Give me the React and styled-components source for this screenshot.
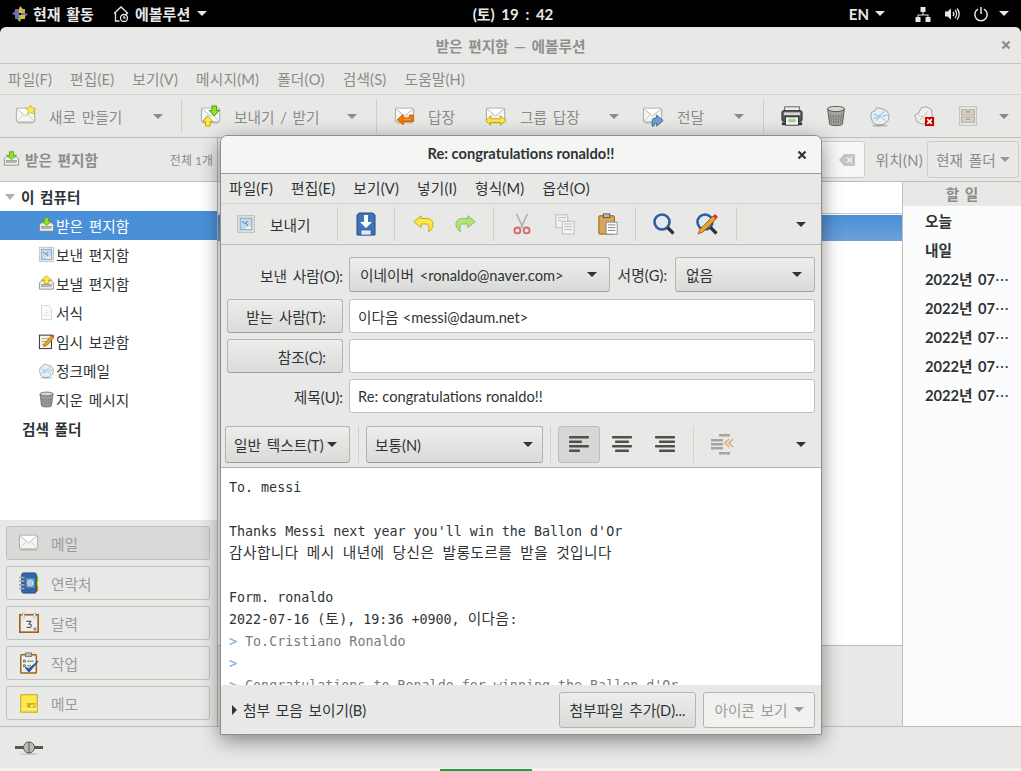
import React from 'react'
import styled, { createGlobalStyle } from 'styled-components'

const GlobalStyle = createGlobalStyle`
  html, body { margin: 0; padding: 0; background: #000; }
  * { box-sizing: border-box; }
`

const Svg = ({ s = 22, children, ...rest }) => (
  <IconSvg width={s} height={s} viewBox="0 0 24 24" {...rest}>{children}</IconSvg>
)

// envelope shared by the mail buttons
const Envelope = () => (
  <g>
    <rect x="1.5" y="3.5" width="20" height="15" rx="1" fill="#f6f6f4" stroke="#a2a29c" />
    <path d="M2 18 9 10.5M21 18l-7-7.5" stroke="#c9c9c4" fill="none" />
    <path d="M2 4l9.5 8L21 4" stroke="#b3b3ad" fill="#fff" />
    <rect x="3" y="19" width="17" height="1.5" fill="#000" opacity=".12" />
  </g>
)

const NewMailIcon = () => (
  <Svg>
    <Envelope />
    <path d="M17 0l1.8 3.3 3.7.5-2.7 2.5.7 3.7L17 8.2l-3.5 1.8.7-3.7-2.7-2.5 3.7-.5z" fill="#fce94f" stroke="#d4b106" strokeWidth=".7" />
  </Svg>
)
const SendReceiveIcon = () => (
  <Svg>
    <Envelope />
    <path d="M13 1h5v5h3l-5.5 6L10 6h3z" fill="#8ae234" stroke="#4e9a06" />
    <path d="M6 23v-5H3l5.5-6 5.5 6h-3v5z" fill="#fce94f" stroke="#c4a000" />
  </Svg>
)
const ReplyIcon = () => (
  <Svg>
    <Envelope />
    <path d="M21 11v7H10v3.500l-6.500-5.500L10 10.500V14h7v-3z" fill="#f57900" stroke="#ce5c00" />
    <path d="M11 15.500h7" stroke="#fcaf3e" />
  </Svg>
)
const GroupReplyIcon = () => (
  <Svg>
    <Envelope />
    <path d="M1 17l5-5v3h11v-3l6 5-6 5v-3H6v3z" fill="#fce94f" stroke="#c4a000" />
  </Svg>
)
const ForwardIcon = () => (
  <Svg>
    <Envelope />
    <path d="M11 23v-5a4 4 0 0 1 4-4h1v-3l7 6-7 6v-3h-2l-1 3z" fill="#729fcf" stroke="#3465a4" />
  </Svg>
)
const PrintIcon = () => (
  <Svg>
    <rect x="4" y="2" width="16" height="5" fill="#eeeeec" stroke="#555" />
    <rect x="1" y="6" width="22" height="12" rx="2" fill="#555753" stroke="#2e3436" />
    <rect x="3" y="8" width="18" height="3" fill="#d3d7cf" />
    <rect x="5" y="13" width="14" height="9" fill="#fff" stroke="#2e3436" />
    <rect x="8" y="15" width="8" height="4" fill="#a9d18e" />
    <rect x="1" y="19" width="4" height="3" fill="#2e3436" />
    <rect x="19" y="19" width="4" height="3" fill="#2e3436" />
  </Svg>
)
const TrashIcon = ({ s = 22 }) => (
  <Svg s={s}>
    <ellipse cx="12" cy="4.500" rx="9.500" ry="3" fill="#d3d7cf" stroke="#555753" />
    <path d="M3 5l2 16c1 2 13 2 14 0l2-16c-3 3-15 3-18 0z" fill="#a6a8a3" stroke="#555753" />
    <path d="M6 9l1 12M9 10l.5 11.500M12 10v12M15 10l-.5 11.500M18 9l-1 12M4 11c4 2 12 2 16 0M4.500 14c4 2 11 2 15 0M5 17c4 2 10 2 14 0" stroke="#6b6d68" strokeWidth=".6" fill="none" />
  </Svg>
)
const JunkIcon = ({ s = 22 }) => (
  <Svg s={s}>
    <path d="M3 8l4-2 1-3 6 1 5 2 3 5-1 6-5 4-7 1-5-3-2-6z" fill="#e4eff6" stroke="#9a9f98" />
    <path d="M5 10l6 2 6-5M8 17l4-5 6 5M5 15l5-2M15 12l5-1" stroke="#84b4d8" fill="none" />
    <ellipse cx="12" cy="22.500" rx="9" ry="1.300" fill="#000" opacity=".2" />
  </Svg>
)
const NotJunkIcon = () => (
  <Svg>
    <path d="M2 11l4-2 3-6 6-1 5 3 1 7-3 6-8 3-6-3z" fill="#eeeeec" stroke="#9a9f98" />
    <path d="M6 11l5 2 5-6M7 17l4-4" stroke="#babdb6" fill="none" />
    <rect x="13" y="13" width="10" height="10" fill="#cc0000" />
    <path d="M15.500 15.500l5 5M20.500 15.500l-5 5" stroke="#fff" strokeWidth="1.800" />
  </Svg>
)
const ArchiveIcon = () => (
  <Svg>
    <rect x="3" y="2" width="18" height="20" fill="#eeeeec" stroke="#b5b5ae" />
    <rect x="5" y="5" width="14" height="6" fill="#d7cfc3" stroke="#b5aca0" />
    <rect x="5" y="13" width="14" height="6" fill="#d7cfc3" stroke="#b5aca0" />
    <rect x="10" y="7" width="4" height="1" fill="#888" />
    <rect x="10" y="15" width="4" height="1" fill="#888" />
  </Svg>
)
const Tray = () => (
  <g>
    <path d="M2 11l3-3h14l3 3v9H2z" fill="#eeeeec" stroke="#73766f" />
    <rect x="5" y="13" width="14" height="3" fill="#babdb6" stroke="#73766f" strokeWidth=".6" />
  </g>
)
const InboxIcon = ({ s = 17 }) => (
  <Svg s={s}>
    <Tray />
    <path d="M9 1h6v5h4l-7 6-7-6h4z" fill="#8ae234" stroke="#4e9a06" />
  </Svg>
)
const OutboxIcon = ({ s = 17 }) => (
  <Svg s={s}>
    <Tray />
    <path d="M9 12V7H5l7-6 7 6h-4v5z" fill="#fce94f" stroke="#c4a000" />
  </Svg>
)
const StampIcon = ({ s = 17 }) => (
  <Svg s={s}>
    <rect x="2" y="2" width="20" height="20" fill="#e6e6e3" stroke="#9a9a94" strokeDasharray="2 1" />
    <rect x="5" y="5" width="14" height="14" fill="#c6daee" stroke="#7f9cb8" />
    <path d="M7 9l6 3 1 3M14 8l-2 3" stroke="#506c88" fill="none" />
    <rect x="12" y="15" width="6" height="3" fill="#fff" opacity=".7" />
  </Svg>
)
const TemplateIcon = ({ s = 17 }) => (
  <Svg s={s}>
    <path d="M5 2h10l4 4v16H5z" fill="#fbfbfa" stroke="#c8c8c3" />
    <path d="M12 8v1M10.500 12v1M13.500 12v1M9 16v1M12 16v1M15 16v1" stroke="#9a9a94" />
  </Svg>
)
const DraftsIcon = ({ s = 17 }) => (
  <Svg s={s}>
    <rect x="2" y="3" width="17" height="19" fill="#f8f4df" stroke="#333" strokeWidth="1.400" />
    <path d="M5 8h11M5 12h8M5 16h5" stroke="#888" />
    <path d="M8 19l1-4 10-11 3 3-10 11z" fill="#f0a030" stroke="#8f5902" />
    <path d="M19 4l2-2 2 2-1 3z" fill="#ef2929" />
  </Svg>
)
const PlainMailIcon = () => (
  <Svg s={22}><Envelope /></Svg>
)
const ContactsIcon = () => (
  <Svg>
    <rect x="18" y="4" width="4" height="7" fill="#73d216" />
    <rect x="18" y="10" width="4" height="7" fill="#edd400" />
    <rect x="18" y="15" width="4" height="6" fill="#f57900" />
    <rect x="4" y="1" width="16" height="22" rx="2" fill="#3465a4" stroke="#204a87" />
    <path d="M1 6h6M1 10h6M1 14h6M1 18h6" stroke="#a8a8a2" strokeWidth="1.800" />
    <rect x="9" y="7" width="9" height="10" fill="#729fcf" />
    <circle cx="13.500" cy="12" r="2.800" fill="none" stroke="#fff" />
    <circle cx="13.500" cy="12" r="1" fill="none" stroke="#fff" strokeWidth=".7" />
  </Svg>
)
const CalendarIcon = () => (
  <Svg>
    <rect x="2" y="3" width="20" height="19" fill="#eeeeec" stroke="#a0611c" strokeWidth="1.800" />
    <rect x="5" y="1" width="2" height="6" rx="1" fill="#fff" stroke="#888" strokeWidth=".5" />
    <rect x="17" y="1" width="2" height="6" rx="1" fill="#fff" stroke="#888" strokeWidth=".5" />
    <path d="M9 10h5l-2 3c2 0 2.500 1 2.500 2 0 2-3 2.500-5 1.500" fill="none" stroke="#444" strokeWidth="1.100" />
    <rect x="17" y="17" width="3" height="3" fill="#888" />
  </Svg>
)
const TasksIcon = () => (
  <Svg>
    <rect x="3" y="3" width="17" height="20" rx="1" fill="#eeeeec" stroke="#a0611c" strokeWidth="1.600" />
    <rect x="8" y="1" width="7" height="4" fill="#babdb6" stroke="#555" strokeWidth=".7" />
    <path d="M6 9h2v2H6zM6 14h2v2H6zM10 10h7M10 15h4" stroke="#555" fill="none" strokeWidth=".9" />
    <path d="M8 17l4 5 10-12-10 8z" fill="#3465a4" stroke="#204a87" />
  </Svg>
)
const MemoIcon = () => (
  <Svg>
    <rect x="3" y="3" width="18" height="19" fill="#fce94f" stroke="#c4a000" />
    <rect x="3" y="18" width="18" height="1" fill="#fff" opacity=".6" />
    <path d="M10 17v-5h9v5z" fill="#c4a000" opacity=".8" />
    <path d="M14 17v-3h5z" fill="#fff6a8" />
  </Svg>
)
const PlugIcon = () => (
  <svg width="28" height="14" viewBox="0 0 28 14">
    <rect x="0" y="5" width="9" height="3" fill="#555753" />
    <rect x="19" y="5" width="9" height="3" fill="#555753" />
    <ellipse cx="14" cy="6.500" rx="5.500" ry="5.500" fill="#babdb6" stroke="#555753" />
    <path d="M14 1v11" stroke="#555753" />
    <ellipse cx="14" cy="13" rx="10" ry="1" fill="#000" opacity=".12" />
  </svg>
)
const SaveIcon = () => (
  <Svg s={24}>
    <path d="M5 1h14l2 2v20H3V3z" fill="#3f74b8" stroke="#204a87" />
    <path d="M10 3h4v7h4l-6 6-6-6h4z" fill="#fff" />
    <rect x="7" y="18" width="10" height="5" fill="#dfe7f1" stroke="#204a87" strokeWidth=".6" />
  </Svg>
)
const UndoIcon = () => (
  <Svg>
    <path d="M10 3L2 9.500 10 16v-4h5c2.500 0 4 1.500 3.500 6l-.5 2.500c3-2 5-5 5-8 0-4-3-6.500-7-6.500h-6z" fill="#fce94f" stroke="#c4a000" />
  </Svg>
)
const RedoIcon = () => (
  <Svg style={{ opacity: 0.6 }}>
    <path d="M14 3l8 6.500L14 16v-4H9c-2.500 0-4 1.500-3.500 6l.5 2.500c-3-2-5-5-5-8 0-4 3-6.500 7-6.500h6z" fill="#8ae234" stroke="#4e9a06" />
  </Svg>
)
const CutIcon = () => (
  <Svg style={{ opacity: 0.55 }}>
    <path d="M6 1l7 15M18 1l-7 15" stroke="#888a85" strokeWidth="1.800" fill="none" />
    <circle cx="7" cy="19" r="3.200" fill="none" stroke="#cc0000" strokeWidth="2" />
    <circle cx="17" cy="19" r="3.200" fill="none" stroke="#cc0000" strokeWidth="2" />
  </Svg>
)
const CopyIcon = () => (
  <Svg style={{ opacity: 0.5 }}>
    <rect x="2" y="2" width="13" height="14" fill="#fff" stroke="#888a85" />
    <rect x="9" y="9" width="13" height="14" fill="#fff" stroke="#888a85" />
    <path d="M4 5h9M4 8h4M11 12h9M11 15h9M11 18h9" stroke="#888a85" />
  </Svg>
)
const PasteIcon = () => (
  <Svg>
    <rect x="2" y="3" width="17" height="20" rx="1" fill="#d7a55c" stroke="#8f5902" />
    <rect x="7" y="1" width="7" height="4" fill="#babdb6" stroke="#555753" />
    <rect x="10" y="10" width="12" height="13" fill="#fff" stroke="#888a85" />
    <path d="M12 13h8M12 16h8M12 19h8" stroke="#777" />
  </Svg>
)
const FindIcon = () => (
  <Svg s={24}>
    <circle cx="10" cy="10" r="7.500" fill="#dfe9f4" stroke="#2f5c9e" strokeWidth="2.600" />
    <path d="M15.500 15.500l6 6" stroke="#2e3436" strokeWidth="3.200" />
  </Svg>
)
const ReplaceIcon = () => (
  <Svg s={24}>
    <circle cx="10" cy="10" r="7.500" fill="#dfe9f4" stroke="#2f5c9e" strokeWidth="2.600" />
    <path d="M15.500 15.500l6 6" stroke="#2e3436" strokeWidth="3.200" />
    <path d="M3 22l2-5L18 4l3 3L8 20z" fill="#f0a030" stroke="#8f5902" strokeWidth=".8" />
    <path d="M18 4l2-2 3 3-2 2z" fill="#ef2929" />
  </Svg>
)
const AlignIcon = ({ kind }) => {
  const lines = [20, 13, 20, 11]
  return (
    <svg width="22" height="20" viewBox="0 0 22 20">
      {lines.map((w, i) => {
        const width = kind === 'left' ? w : kind === 'center' ? (i % 2 ? 14 : 20) : (i % 2 ? 16 : 20)
        const x = kind === 'left' ? 1 : kind === 'center' ? (22 - width) / 2 : 21 - width
        return <rect key={i} x={x} y={2 + i * 4.500} width={width} height="2.500" rx=".8" fill="#4f4f4c" />
      })}
    </svg>
  )
}
const IndentIcon = () => (
  <svg width="24" height="22" viewBox="0 0 24 22" style={{ opacity: 0.6 }}>
    <rect x="9" y="1" width="11" height="2.500" fill="#777" />
    <rect x="1" y="6" width="12" height="2.500" fill="#777" />
    <rect x="1" y="10" width="12" height="2.500" fill="#777" />
    <rect x="1" y="14" width="12" height="2.500" fill="#777" />
    <rect x="9" y="19" width="11" height="2.500" fill="#777" />
    <path d="M19 6l-4 4 4 4M23 6l-4 4 4 4" stroke="#e9822e" strokeWidth="1.600" fill="none" />
  </svg>
)
const CentOsIcon = () => (
  <svg width="16" height="16" viewBox="0 0 16 16">
    <path d="M8 0l3 3v4H7V3z" fill="#cfc34a" />
    <path d="M16 8l-3 3H9V7h4z" fill="#9c5aa8" />
    <path d="M8 16l-3-3V9h4v4z" fill="#a8c14a" />
    <path d="M0 8l3-3h4v4H3z" fill="#5a7fb5" />
    <rect x="3" y="3" width="4" height="4" fill="#9c5aa8" />
    <rect x="9" y="9" width="4" height="4" fill="#cfc34a" />
    <rect x="3" y="9" width="4" height="4" fill="#5a7fb5" />
    <rect x="9" y="3" width="4" height="4" fill="#a8c14a" />
  </svg>
)
const AppIcon = () => (
  <svg width="16" height="16" viewBox="0 0 16 16" fill="none" stroke="#e8e8e8" strokeWidth="1.300">
    <path d="M1 7.500L8 1l7 6.500M2.500 7v8h4M13.500 7v2" />
    <circle cx="11" cy="12" r="3.500" />
    <path d="M11 10v2h1.500" />
  </svg>
)
const NetworkIcon = () => (
  <svg width="16" height="16" viewBox="0 0 16 16" fill="#e8e8e8">
    <rect x="5.500" y="1" width="5" height="5" />
    <rect x="0.500" y="11" width="5" height="5" />
    <rect x="10.500" y="11" width="5" height="5" />
    <path d="M7.500 6h1v2.500h5V11h-1V9.500h-9V11h-1V8.500h5z" />
  </svg>
)
const VolumeIcon = () => (
  <svg width="16" height="16" viewBox="0 0 16 16" fill="none" stroke="#e8e8e8" strokeWidth="1.300">
    <path d="M1 5.500h2.500L7 2.500v11l-3.500-3H1z" fill="#e8e8e8" stroke="none" />
    <path d="M9 6a3 3 0 0 1 0 4M11 4a6 6 0 0 1 0 8M13 2.500a8 8 0 0 1 0 11" />
  </svg>
)
const PowerIcon = () => (
  <svg width="16" height="16" viewBox="0 0 16 16" fill="none" stroke="#e8e8e8" strokeWidth="1.500">
    <path d="M5 3.200a6.200 6.200 0 1 0 6 0M8 1v7" />
  </svg>
)
const CloseGlyph = ({ color }) => (
  <svg width="10" height="10" viewBox="0 0 10 10">
    <path d="M1.500 1.500l7 7M8.500 1.500l-7 7" stroke={color} strokeWidth="2.200" />
  </svg>
)
const ClearIcon = () => (
  <svg width="16" height="12" viewBox="0 0 16 12">
    <path d="M5 0h11v12H5L0 6z" fill="#c5c5c2" />
    <path d="M8 3.500l5 5M13 3.500l-5 5" stroke="#f3f3f2" strokeWidth="1.600" />
  </svg>
)

const mainMenu = ['파일(F)', '편집(E)', '보기(V)', '메시지(M)', '폴더(O)', '검색(S)', '도움말(H)']
const composeMenu = ['파일(F)', '편집(E)', '보기(V)', '넣기(I)', '형식(M)', '옵션(O)']
const folders = [
  { name: '받은 편지함', icon: <InboxIcon />, selected: true },
  { name: '보낸 편지함', icon: <StampIcon /> },
  { name: '보낼 편지함', icon: <OutboxIcon /> },
  { name: '서식', icon: <TemplateIcon /> },
  { name: '임시 보관함', icon: <DraftsIcon /> },
  { name: '정크메일', icon: <JunkIcon s={17} /> },
  { name: '지운 메시지', icon: <TrashIcon s={17} /> },
]
const switches = [
  { name: '메일', icon: <PlainMailIcon />, active: true },
  { name: '연락처', icon: <ContactsIcon /> },
  { name: '달력', icon: <CalendarIcon /> },
  { name: '작업', icon: <TasksIcon /> },
  { name: '메모', icon: <MemoIcon /> },
]
const todoDays = ['오늘', '내일', '2022년 07', '2022년 07', '2022년 07', '2022년 07', '2022년 07']

export default function App() {
  return (
    <Desktop>
      <GlobalStyle />
      <TopBar>
        <TopItem $w={105} $pl={12}><CentOsIcon /><TopLabel $gap={5}>현재 활동</TopLabel></TopItem>
        <TopItem $w={364} $pl={8}><AppIcon /><TopLabel $gap={6}>에볼루션</TopLabel><Caret $c="#e8e8e8" $ml={7} /></TopItem>
        <Clock>(토) 19 : 42</Clock>
        <TopRight>
          <TopLabel>EN</TopLabel><Caret $c="#e8e8e8" $ml={6} />
          <TrayIcons><NetworkIcon /><VolumeIcon /><PowerIcon /></TrayIcons>
          <Caret $c="#e8e8e8" $ml={10} />
        </TopRight>
      </TopBar>

      <MainWindow>
        <MainTitle>
          <span>받은 편지함 — 에볼루션</span>
          <TitleClose><CloseGlyph color="#8b8b89" /></TitleClose>
        </MainTitle>
        <MainMenuBar>
          {mainMenu.map((m) => <span key={m}>{m}</span>)}
        </MainMenuBar>
        <MainToolbar>
          <ToolBtn $w={181} $pl={15} $pr={18}><NewMailIcon /><ToolLabel $ml={12}>새로 만들기</ToolLabel><Caret $c="#8a8a88" $auto /></ToolBtn>
          <VSep />
          <ToolBtn $w={194} $pl={18} $pr={19}><SendReceiveIcon /><ToolLabel $ml={12}>보내기 / 받기</ToolLabel><Caret $c="#8a8a88" $auto /></ToolBtn>
          <VSep />
          <ToolBtn $w={91} $pl={17} $pr={0}><ReplyIcon /><ToolLabel $ml={12}>답장</ToolLabel></ToolBtn>
          <ToolBtn $w={156} $pl={17} $pr={5}><GroupReplyIcon /><ToolLabel $ml={13}>그룹 답장</ToolLabel><Caret $c="#8a8a88" $auto /></ToolBtn>
          <ToolBtn $w={139} $pl={18} $pr={19}><ForwardIcon /><ToolLabel $ml={13}>전달</ToolLabel><Caret $c="#8a8a88" $auto /></ToolBtn>
          <VSep />
          <IconRow>
            <PrintIcon /><TrashIcon /><JunkIcon /><NotJunkIcon /><ArchiveIcon />
          </IconRow>
          <Caret $c="#8a8a88" $auto $mr={12} />
        </MainToolbar>

        <MainBody>
          <Sidebar>
            <FolderHeader>
              <InboxIcon />
              <FolderTitle>받은 편지함</FolderTitle>
              <FolderCount>전체 1개</FolderCount>
            </FolderHeader>
            <FolderTree>
              <TreeGroup><Expander />이 컴퓨터</TreeGroup>
              {folders.map((f) => (
                <FolderRow key={f.name} $selected={f.selected}>{f.icon}<span>{f.name}</span></FolderRow>
              ))}
              <TreeGroup $plain>검색 폴더</TreeGroup>
            </FolderTree>
            <Switcher>
              {switches.map((s) => (
                <SwitchBtn key={s.name} $active={s.active}>
                  <SwitchIcon>{s.icon}</SwitchIcon>{s.name}
                </SwitchBtn>
              ))}
            </Switcher>
          </Sidebar>

          <Center>
            <SearchBar>
              <SearchEntry><ClearIcon /></SearchEntry>
              <SearchLabel>위치(N)</SearchLabel>
              <ScopeCombo>현재 폴더<Caret $c="#999" $ml={4} /></ScopeCombo>
            </SearchBar>
            <CenterRow>
              <MessagePane>
                <ListHeader />
                <MessageList><SelectedMessage /></MessageList>
                <PreviewPane />
              </MessagePane>
              <TodoPanel>
                <TodoHeader>할 일</TodoHeader>
                {todoDays.map((d, i) => (
                  <TodoRow key={i}>{d}{i > 1 && <MidEllipsis>…</MidEllipsis>}</TodoRow>
                ))}
              </TodoPanel>
            </CenterRow>
          </Center>
        </MainBody>
        <StatusBar><PlugIcon /></StatusBar>
      </MainWindow>

      <Sliver>
        <SliverPart $w={440} />
        <SliverGreen />
        <SliverPart $w={40} />
      </Sliver>

      <ComposeWindow>
        <ComposeTitle>
          <span>Re: congratulations ronaldo!!</span>
          <TitleClose $right={14}><CloseGlyph color="#2e3436" /></TitleClose>
        </ComposeTitle>
        <ComposeMenuBar>
          {composeMenu.map((m) => <span key={m}>{m}</span>)}
        </ComposeMenuBar>
        <ComposeToolbar>
          <SendBtn><StampIcon s={20} /><span>보내기</span></SendBtn>
          <VSep />
          <Slot $w={56}><SaveIcon /></Slot>
          <VSep />
          <SlotGroup $pl={6} $pr={6}>
            <Slot $w={43}><UndoIcon /></Slot>
            <Slot $w={43}><RedoIcon /></Slot>
          </SlotGroup>
          <VSep />
          <SlotGroup $pl={6} $pr={6}>
            <Slot $w={43}><CutIcon /></Slot>
            <Slot $w={43}><CopyIcon /></Slot>
            <Slot $w={43}><PasteIcon /></Slot>
          </SlotGroup>
          <VSep />
          <SlotGroup $pl={6} $pr={8}>
            <Slot $w={43}><FindIcon /></Slot>
            <Slot $w={43}><ReplaceIcon /></Slot>
          </SlotGroup>
          <VSep />
          <Caret $c="#2e3436" $auto $mr={15} />
        </ComposeToolbar>

        <HeaderForm>
          <FieldLabel>보낸 사람(O):</FieldLabel>
          <FromRow>
            <Combo $grow>
              <span>이네이버 &lt;ronaldo@naver.com&gt;</span>
              <Caret $c="#2e3436" $auto $mr={6} />
            </Combo>
            <SignLabel>서명(G):</SignLabel>
            <Combo $w={140}>
              <span>없음</span>
              <Caret $c="#2e3436" $auto $mr={6} />
            </Combo>
          </FromRow>
          <AddressBtn>받는 사람(T):</AddressBtn>
          <TextEntry>이다음 &lt;messi@daum.net&gt;</TextEntry>
          <AddressBtn>참조(C):</AddressBtn>
          <TextEntry />
          <FieldLabel>제목(U):</FieldLabel>
          <TextEntry>Re: congratulations ronaldo!!</TextEntry>
        </HeaderForm>

        <FormatBar>
          <FormatCombo $w={125}>일반 텍스트(T)<Caret $c="#2e3436" $ml={3} /></FormatCombo>
          <FormatSep />
          <FormatCombo $w={177}>보통(N)<Caret $c="#2e3436" $auto $mr={3} /></FormatCombo>
          <FormatSep $ml={7} />
          <AlignBtn $on><AlignIcon kind="left" /></AlignBtn>
          <AlignBtn $ml={1}><AlignIcon kind="center" /></AlignBtn>
          <AlignBtn $ml={1}><AlignIcon kind="right" /></AlignBtn>
          <FormatSep $ml={7} />
          <Slot $w={42}><IndentIcon /></Slot>
          <Caret $c="#2e3436" $auto $mr={15} />
        </FormatBar>

        <MailBody>
          <Line>To. messi</Line>
          <Line />
          <Line>Thanks Messi next year you'll win the Ballon d'Or</Line>
          <Line><Hangul>감사합니다 메시 내년에 당신은 발롱도르를 받을 것입니다</Hangul></Line>
          <Line />
          <Line>Form. ronaldo</Line>
          <Line>2022-07-16 (<Hangul>토</Hangul>), 19:36 +0900, <Hangul>이다음</Hangul>:</Line>
          <Line $quote><QuoteMark>&gt;</QuoteMark> To.Cristiano Ronaldo</Line>
          <Line $quote><QuoteMark>&gt;</QuoteMark></Line>
          <Line $quote><QuoteMark>&gt;</QuoteMark> Congratulations to Ronaldo for winning the Ballon d'Or</Line>
        </MailBody>

        <ComposeFooter>
          <AttachToggle><RightCaret />첨부 모음 보이기(B)</AttachToggle>
          <FooterBtn $w={137}>첨부파일 추가(D)...</FooterBtn>
          <FooterBtn $w={112} $disabled>아이콘 보기<Caret $c="#9a9a98" $ml={6} /></FooterBtn>
        </ComposeFooter>
      </ComposeWindow>
    </Desktop>
  )
}

const IconSvg = styled.svg`
  flex: none;
  display: block;
`

const Desktop = styled.div`
  position: relative;
  width: 1021px;
  height: 771px;
  overflow: hidden;
  background: #000;
  font-family: Lato, "Noto Sans CJK KR", sans-serif;
  font-size: 14.67px;
  word-spacing: 2px;
  color: #2e3436;
`

const Caret = styled.span`
  flex: none;
  width: 0;
  height: 0;
  border-left: 5px solid transparent;
  border-right: 5px solid transparent;
  border-top: 5px solid ${(p) => p.$c};
  margin-left: ${(p) => (p.$auto ? 'auto' : `${p.$ml || 0}px`)};
  margin-right: ${(p) => p.$mr || 0}px;
`

const TopBar = styled.div`
  display: flex;
  align-items: center;
  height: 27px;
  color: #e8e8e8;
  font-weight: 700;
  font-size: 15px;
`

const TopItem = styled.div`
  display: flex;
  align-items: center;
  flex: none;
  width: ${(p) => p.$w}px;
  padding-left: ${(p) => p.$pl}px;
`

const TopLabel = styled.span`
  margin-left: ${(p) => p.$gap || 0}px;
`

const Clock = styled.div`
  flex: none;
  width: 88px;
  word-spacing: 3px;
  text-align: center;
  white-space: nowrap;
`

const TopRight = styled.div`
  display: flex;
  align-items: center;
  margin-left: auto;
  padding-right: 12px;
`

const TrayIcons = styled.div`
  display: flex;
  align-items: center;
  gap: 13px;
  margin-left: 30px;
`

const MainWindow = styled.div`
  display: flex;
  flex-direction: column;
  height: 741px;
  background: #e8e8e7;
  border-radius: 6px 6px 0 0;
  color: #8b8b89;
`

const MainTitle = styled.div`
  position: relative;
  flex: none;
  height: 37px;
  display: flex;
  align-items: center;
  justify-content: center;
  border-bottom: 1px solid #c4c4c1;
  font-weight: 700;
  font-size: 14.67px;
  color: #8f8f8d;
`

const TitleClose = styled.span`
  position: absolute;
  right: ${(p) => p.$right || 10}px;
  top: 50%;
  margin-top: -5px;
  display: flex;
`

const MainMenuBar = styled.div`
  flex: none;
  height: 31px;
  display: flex;
  align-items: center;
  gap: 18px;
  padding: 0 0 2px 8px;
  letter-spacing: 0.2px;
  border-bottom: 1px solid #d2d2cf;
`

const MainToolbar = styled.div`
  flex: none;
  height: 43px;
  display: flex;
  align-items: center;
  border-bottom: 1px solid #bdbdba;
`

const ToolBtn = styled.div`
  flex: none;
  display: flex;
  align-items: center;
  width: ${(p) => p.$w}px;
  padding: 0 ${(p) => p.$pr}px 0 ${(p) => p.$pl}px;
`

const ToolLabel = styled.span`
  margin-left: ${(p) => p.$ml}px;
  white-space: nowrap;
`

const VSep = styled.span`
  flex: none;
  width: 1px;
  height: 34px;
  background: #cfcfcc;
`

const IconRow = styled.div`
  display: flex;
  align-items: center;
  gap: 22px;
  padding-left: 17px;
`

const MainBody = styled.div`
  flex: 1;
  min-height: 0;
  display: flex;
  border-bottom: 1px solid #bdbdba;
`

const Sidebar = styled.div`
  flex: none;
  width: 218px;
  display: flex;
  flex-direction: column;
  border-right: 1px solid #bdbdba;
`

const FolderHeader = styled.div`
  flex: none;
  height: 44px;
  display: flex;
  align-items: center;
  padding: 0 4px 0 3px;
  border-bottom: 1px solid #bdbdba;
`

const FolderTitle = styled.span`
  margin-left: 5px;
  font-weight: 700;
`

const FolderCount = styled.span`
  margin-left: auto;
  font-size: 12px;
  word-spacing: 0;
`

const FolderTree = styled.div`
  flex: none;
  height: 338px;
  background: #fff;
  color: #2e3436;
`

const TreeGroup = styled.div`
  height: 29px;
  display: flex;
  align-items: center;
  padding-left: ${(p) => (p.$plain ? 22 : 5)}px;
  font-weight: 700;
`

const Expander = styled.span`
  width: 0;
  height: 0;
  margin-right: 6px;
  border-left: 5.5px solid transparent;
  border-right: 5.5px solid transparent;
  border-top: 6px solid #b0b0ae;
`

const FolderRow = styled.div`
  height: 29px;
  display: flex;
  align-items: center;
  gap: 1px;
  padding-left: 38px;
  background: ${(p) => (p.$selected ? '#4a90d9' : 'transparent')};
  color: ${(p) => (p.$selected ? '#fff' : '#2e3436')};
`

const Switcher = styled.div`
  flex: 1;
  display: flex;
  flex-direction: column;
  gap: 6px;
  padding: 6px 7px 0 6px;
  background: #e8e8e7;
`

const SwitchBtn = styled.div`
  height: 34px;
  display: flex;
  align-items: center;
  padding-left: 11px;
  border: 1px solid #c0c0bd;
  border-radius: 3px;
  background: ${(p) => (p.$active ? '#d9d9d8' : '#e9e9e8')};
  color: #9a9a98;
`

const SwitchIcon = styled.span`
  flex: none;
  width: 33px;
  display: flex;
`

const Center = styled.div`
  flex: 1;
  min-width: 0;
  display: flex;
  flex-direction: column;
`

const SearchBar = styled.div`
  flex: none;
  height: 44px;
  display: flex;
  align-items: center;
  justify-content: flex-end;
  padding-right: 2px;
  border-bottom: 1px solid #bdbdba;
`

const SearchEntry = styled.div`
  width: 200px;
  height: 37px;
  display: flex;
  align-items: center;
  justify-content: flex-end;
  padding-right: 9px;
  background: #f8f8f8;
  border: 1px solid #cdcdca;
  border-radius: 3px;
`

const SearchLabel = styled.span`
  margin: 0 4px 0 11px;
  letter-spacing: 0.3px;
`

const ScopeCombo = styled.div`
  width: 92px;
  height: 37px;
  display: flex;
  align-items: center;
  padding-left: 8px;
  white-space: nowrap;
  border: 1px solid #cdcdca;
  border-radius: 3px;
  background: #e9e9e8;
`

const CenterRow = styled.div`
  flex: 1;
  min-height: 0;
  display: flex;
`

const MessagePane = styled.div`
  flex: 1;
  min-width: 0;
  display: flex;
  flex-direction: column;
  background: #fff;
`

const ListHeader = styled.div`
  flex: none;
  height: 32px;
  background: #fff;
  border-bottom: 1px solid #c8c8c5;
`

const MessageList = styled.div`
  flex: 1;
  min-height: 0;
`

const SelectedMessage = styled.div`
  height: 26px;
  margin-top: 1px;
  background: linear-gradient(#4a90d9, #6ba0d8);
`

const PreviewPane = styled.div`
  flex: none;
  height: 81px;
  background: #e8e8e7;
  border-top: 1px solid #bdbdba;
`

const TodoPanel = styled.div`
  flex: none;
  width: 119px;
  background: #fcfcfc;
  border-left: 1px solid #bdbdba;
  color: #2e3436;
  font-weight: 700;
`

const TodoHeader = styled.div`
  height: 24px;
  padding-bottom: 2px;
  display: flex;
  align-items: center;
  justify-content: center;
  background: #e8e8e7;
  color: #8b8b89;
`

const TodoRow = styled.div`
  height: 29px;
  display: flex;
  align-items: center;
  padding-left: 22px;
  white-space: nowrap;
`

const MidEllipsis = styled.span`
  font-family: "Noto Sans CJK KR", sans-serif;
  font-weight: 500;
  font-size: 14px;
`

const StatusBar = styled.div`
  flex: none;
  height: 41px;
  display: flex;
  align-items: center;
  padding-left: 15px;
`

const Sliver = styled.div`
  height: 3px;
  display: flex;
  background: #f1f1f0;
`

const SliverPart = styled.span`
  width: ${(p) => p.$w}px;
`

const SliverGreen = styled.span`
  width: 92px;
  margin-top: 1px;
  background: #1aa33a;
`

const ComposeWindow = styled.div`
  position: absolute;
  left: 220px;
  top: 135px;
  width: 602px;
  height: 600px;
  display: flex;
  flex-direction: column;
  background: #e8e8e7;
  border: 1px solid #8e8e8b;
  border-radius: 7px 7px 0 0;
  box-shadow: 0 5px 20px rgba(0, 0, 0, 0.45);
  color: #2e3436;
  overflow: hidden;
`

const ComposeTitle = styled.div`
  position: relative;
  flex: none;
  height: 38px;
  display: flex;
  align-items: center;
  justify-content: center;
  padding-bottom: 3px;
  background: #f5f5f4;
  border-bottom: 1px solid #9c9c99;
  font-weight: 700;
  word-spacing: 0;
`

const ComposeMenuBar = styled.div`
  flex: none;
  height: 30px;
  display: flex;
  align-items: center;
  gap: 18px;
  padding: 0 0 2px 8px;
  letter-spacing: 0.2px;
  border-bottom: 1px solid #d2d2cf;
`

const ComposeToolbar = styled.div`
  flex: none;
  height: 41px;
  display: flex;
  align-items: center;
  border-bottom: 1px solid #bdbdba;
`

const SendBtn = styled.div`
  flex: none;
  width: 116px;
  display: flex;
  align-items: center;
  gap: 14px;
  padding-left: 15px;
`

const Slot = styled.div`
  flex: none;
  width: ${(p) => p.$w}px;
  display: flex;
  align-items: center;
  justify-content: center;
`

const SlotGroup = styled.div`
  flex: none;
  display: flex;
  padding: 0 ${(p) => p.$pr}px 0 ${(p) => p.$pl}px;
`

const HeaderForm = styled.div`
  flex: none;
  height: 180px;
  display: grid;
  grid-template-columns: 116px 1fr;
  grid-template-rows: 36px 34px 34px 34px;
  column-gap: 6px;
  row-gap: 6px;
  align-items: center;
  padding: 12px 6px 0 6px;
`

const FieldLabel = styled.span`
  text-align: right;
  white-space: nowrap;
`

const FromRow = styled.div`
  display: flex;
  align-items: center;
  align-self: start;
  height: 35px;
`

const buttonFace = `
  background: linear-gradient(#ededec, #dadad8);
  border: 1px solid #b4b4b1;
  border-bottom-color: #9f9f9c;
  border-radius: 3px;
`

const Combo = styled.div`
  ${buttonFace}
  display: flex;
  align-items: center;
  height: 35px;
  flex: ${(p) => (p.$grow ? 1 : 'none')};
  width: ${(p) => (p.$w ? `${p.$w}px` : 'auto')};
  padding: 0 6px 0 10px;
  white-space: nowrap;
`

const SignLabel = styled.span`
  flex: none;
  width: 65px;
  text-align: center;
  letter-spacing: 0.1px;
`

const AddressBtn = styled.div`
  ${buttonFace}
  height: 34px;
  display: flex;
  align-items: center;
  justify-content: flex-end;
  padding-right: 16px;
  white-space: nowrap;
`

const TextEntry = styled.div`
  height: 34px;
  display: flex;
  align-items: center;
  padding-left: 8px;
  background: #fff;
  border: 1px solid #c0c0bd;
  border-radius: 3px;
  word-spacing: 0.5px;
`

const FormatBar = styled.div`
  flex: none;
  height: 43px;
  display: flex;
  align-items: center;
  padding: 0 0 4px 4px;
  border-bottom: 1px solid #b4b4b1;
`

const FormatCombo = styled.div`
  ${buttonFace}
  flex: none;
  width: ${(p) => p.$w}px;
  height: 37px;
  display: flex;
  align-items: center;
  padding: 0 6px 0 8px;
  white-space: nowrap;
`

const FormatSep = styled.span`
  flex: none;
  width: 1px;
  height: 37px;
  margin: 0 7px 0 ${(p) => p.$ml || 8}px;
  background: #d2d2cf;
`

const AlignBtn = styled.div`
  flex: none;
  width: 42px;
  height: 37px;
  margin-left: ${(p) => p.$ml || 0}px;
  display: flex;
  align-items: center;
  justify-content: center;
  border: 1px solid ${(p) => (p.$on ? '#bdbdba' : 'transparent')};
  border-radius: 3px;
  background: ${(p) => (p.$on ? '#d7d7d6' : 'transparent')};
`

const MailBody = styled.div`
  flex: 1;
  min-height: 0;
  overflow: hidden;
  padding: 9px 0 0 8px;
  background: #fff;
  font-family: "DejaVu Sans Mono", "Noto Sans CJK KR", monospace;
  font-size: 13.33px;
  word-spacing: 0;
`

const Line = styled.div`
  height: 22px;
  line-height: 22px;
  white-space: pre;
  color: ${(p) => (p.$quote ? '#7a7a7a' : '#2e3436')};
`

const Hangul = styled.span`
  font-family: "Noto Sans CJK KR", sans-serif;
  font-size: 14.67px;
  line-height: 1;
  letter-spacing: 0.46px;
  word-spacing: 4.3px;
`

const QuoteMark = styled.span`
  color: #729fcf;
`

const ComposeFooter = styled.div`
  flex: none;
  height: 49px;
  display: flex;
  align-items: center;
  gap: 7px;
  padding: 0 6px 0 11px;
`

const AttachToggle = styled.div`
  display: flex;
  align-items: center;
  margin-right: auto;
  white-space: nowrap;
`

const RightCaret = styled.span`
  width: 0;
  height: 0;
  margin-right: 6px;
  border-top: 5px solid transparent;
  border-bottom: 5px solid transparent;
  border-left: 5px solid #2e3436;
`

const FooterBtn = styled.div`
  flex: none;
  width: ${(p) => p.$w}px;
  height: 36px;
  display: flex;
  align-items: center;
  justify-content: center;
  white-space: nowrap;
  border-radius: 3px;
  border: 1px solid #b4b4b1;
  background: ${(p) => (p.$disabled ? '#f1f1f0' : 'linear-gradient(#ededec, #dadad8)')};
  color: ${(p) => (p.$disabled ? '#9a9a98' : '#2e3436')};
`
